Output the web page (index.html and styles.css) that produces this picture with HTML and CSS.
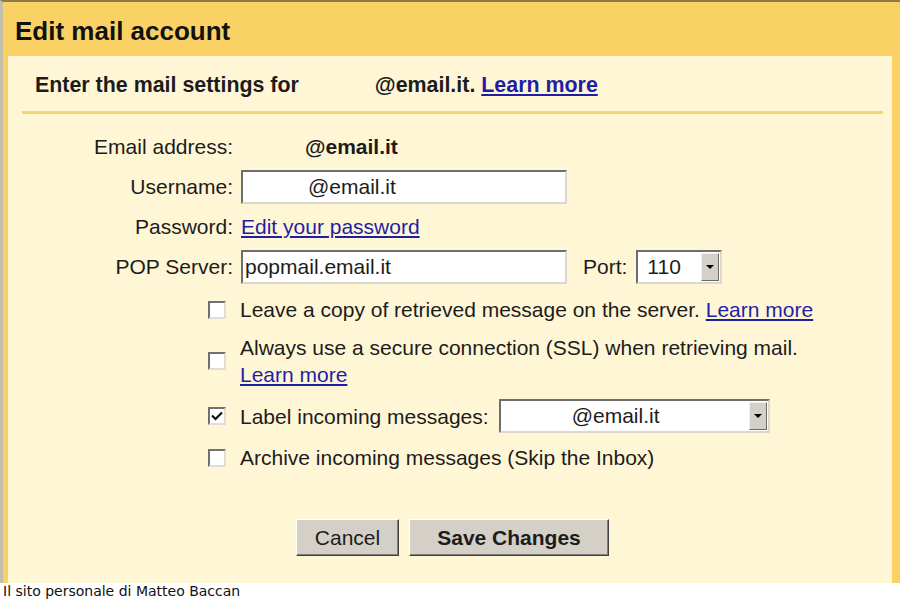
FILE: index.html
```html
<!DOCTYPE html>
<html lang="en">
<head>
    <meta charset="UTF-8">
    <meta name="viewport" content="width=device-width, initial-scale=1.0">
    <title>Edit mail account</title>
    <link rel="stylesheet" href="styles.css">
</head>
<body>
    <div class="window">
        <div class="title">Edit mail account</div>
        <div class="panel">
            <div class="intro">
                Enter the mail settings for <span class="masked">@email.it.</span>
                <a href="#" class="learn">Learn more</a>
            </div>
            <div class="rule"></div>

            <div class="fields">
                <div class="label">Email address:</div>
                <div class="value email">@email.it</div>

                <div class="label">Username:</div>
                <div class="value"><input type="text" class="text user" value="@email.it"></div>

                <div class="label">Password:</div>
                <div class="value"><a href="#">Edit your password</a></div>

                <div class="label">POP Server:</div>
                <div class="value">
                    <input type="text" class="text" value="popmail.email.it">
                    <span class="port-label">Port:</span>
                    <div class="select port">
                        <span class="select-text">110</span>
                        <span class="arrow"></span>
                    </div>
                </div>
            </div>

            <div class="options">
                <div class="option">
                    <span class="check"></span>
                    <span>Leave a copy of retrieved message on the server. <a href="#">Learn more</a></span>
                </div>
                <div class="option">
                    <span class="check"></span>
                    <span>Always use a secure connection (SSL) when retrieving mail.<br><a href="#">Learn more</a></span>
                </div>
                <div class="option">
                    <span class="check checked">
                        <svg width="14" height="14" viewBox="0 0 14 14"><path d="M2 6.5 L5.5 10 L12 3.5" fill="none" stroke="#111" stroke-width="2.2"/></svg>
                    </span>
                    <span>Label incoming messages:</span>
                    <div class="select label-select">
                        <span class="select-text">@email.it</span>
                        <span class="arrow"></span>
                    </div>
                </div>
                <div class="option">
                    <span class="check"></span>
                    <span>Archive incoming messages (Skip the Inbox)</span>
                </div>
            </div>

            <div class="actions">
                <button type="button" class="cancel">Cancel</button>
                <button type="button" class="save">Save Changes</button>
            </div>
        </div>
    </div>
    <div class="footer">Il sito personale di Matteo Baccan</div>
</body>
</html>
```

FILE: styles.css
```css
body {
    margin: 0;
    font-family: "Liberation Sans", Arial, sans-serif;
    font-size: 21px;
    color: #1c1c1c;
    background: #fff;
}
a {
    color: #1f1fa6;
}
.window {
    background-color: #fad164;
    border-top: 2px solid #8c7b41;
    border-left: 3px solid #c4beae;
    padding: 0 8px 0 5px;
    height: 583px;
    box-sizing: border-box;
    display: flex;
    flex-direction: column;
}
.title {
    font-size: 26px;
    font-weight: bold;
    color: #111;
    padding: 5px 0 0 7px;
    line-height: 49px;
}
.panel {
    flex: 1;
    background-color: #fff6d6;
}
.intro {
    font-weight: bold;
    font-size: 21.4px;
    padding: 17px 0 0 27px;
    line-height: 24px;
}
.masked {
    margin-left: 70px;
}
.learn {
    font-weight: bold;
}
.rule {
    height: 3px;
    background-color: #f3d677;
    margin: 14px 9px 0 14px;
}
.fields {
    display: grid;
    grid-template-columns: 225px auto;
    column-gap: 8px;
    row-gap: 6px;
    margin-top: 16px;
}
.label {
    text-align: right;
    height: 34px;
    line-height: 34px;
}
.value {
    display: flex;
    align-items: center;
    height: 34px;
}
.email {
    font-weight: bold;
    padding-left: 64px;
}
.text {
    font-family: inherit;
    font-size: 21px;
    color: #1c1c1c;
    width: 326px;
    height: 34px;
    box-sizing: border-box;
    padding: 0 2px;
    background: #fff;
    border: 2px solid;
    border-color: #6e6e6e #dcd8d0 #dcd8d0 #6e6e6e;
    outline: none;
}
.user {
    padding-left: 65px;
}
.port-label {
    margin: 0 8px 0 16px;
}
.select {
    display: flex;
    align-items: stretch;
    height: 34px;
    box-sizing: border-box;
    background: #fff;
    border: 2px solid;
    border-color: #6e6e6e #dcd8d0 #dcd8d0 #6e6e6e;
}
.select-text {
    flex: 1;
    line-height: 30px;
}
.port {
    width: 86px;
    margin-left: 1px;
}
.port .select-text {
    padding-left: 9px;
}
.arrow {
    width: 18px;
    margin: 1px;
    box-sizing: border-box;
    background: #d4d0c8;
    border: 1px solid;
    border-color: #f4f2ee #6a6a6a #6a6a6a #f4f2ee;
    position: relative;
}
.arrow::after {
    content: "";
    position: absolute;
    left: 4px;
    top: 11px;
    border-left: 4px solid transparent;
    border-right: 4px solid transparent;
    border-top: 4px solid #000;
}
.options {
    margin-top: 12px;
    padding-left: 200px;
    display: flex;
    flex-direction: column;
    gap: 11px;
}
.option {
    display: flex;
    align-items: center;
    gap: 14px;
    line-height: 27px;
}
.check {
    width: 18px;
    height: 18px;
    box-sizing: border-box;
    flex-shrink: 0;
    background: #fff;
    border: 2px solid;
    border-color: #707070 #e0ddd6 #e0ddd6 #707070;
    display: flex;
    align-items: center;
    justify-content: center;
}
.label-select {
    width: 271px;
    margin-left: -4px;
}
.label-select .select-text {
    padding-left: 71px;
}
.actions {
    display: flex;
    justify-content: center;
    gap: 10px;
    margin-top: 48px;
    padding-left: 5px;
}
button {
    font-family: inherit;
    font-size: 21px;
    color: #1c1c1c;
    height: 37px;
    background-color: #d4d0c8;
    border: 1px solid;
    border-color: #fff #404040 #404040 #fff;
    box-shadow: inset -1px -1px 0 #808080;
    padding: 0;
}
.cancel {
    width: 103px;
}
.save {
    width: 200px;
    font-weight: bold;
}
.footer {
    font-family: "DejaVu Sans", Verdana, sans-serif;
    font-size: 14px;
    line-height: 17px;
    padding-left: 3px;
    color: #111;
}
```
